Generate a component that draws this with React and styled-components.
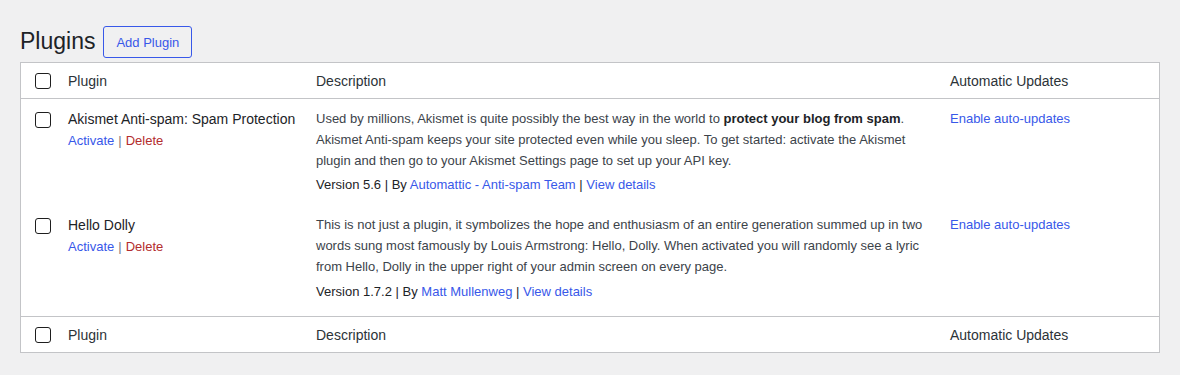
import styled, { createGlobalStyle } from "styled-components";

const GlobalStyle = createGlobalStyle`
  body {
    margin: 0;
    background: #f0f0f1;
    font-family: "Liberation Sans", Arial, sans-serif;
    color: #3c434a;
  }
`;

const plugins = [
  {
    id: "akismet",
    name: "Akismet Anti-spam: Spam Protection",
    desc: (
      <>
        Used by millions, Akismet is quite possibly the best way in the world
        to <strong>protect your blog from spam</strong>. Akismet Anti-spam
        keeps your site protected even while you sleep. To get started:
        activate the Akismet plugin and then go to your Akismet Settings page
        to set up your API key.
      </>
    ),
    version: "5.6",
    author: "Automattic - Anti-spam Team",
  },
  {
    id: "hello",
    name: "Hello Dolly",
    desc: (
      <>
        This is not just a plugin, it symbolizes the hope and enthusiasm of an
        entire generation summed up in two words sung most famously by Louis
        Armstrong: Hello, Dolly. When activated you will randomly see a lyric
        from Hello, Dolly in the upper right of your admin screen on every
        page.
      </>
    ),
    version: "1.7.2",
    author: "Matt Mullenweg",
  },
];

function HeadRow({ top }) {
  return (
    <Row $head $top={top}>
      <CheckCell $head>
        <Checkbox />
      </CheckCell>
      <HeadCell>Plugin</HeadCell>
      <HeadCell>Description</HeadCell>
      <HeadCell>Automatic Updates</HeadCell>
    </Row>
  );
}

export default function App() {
  return (
    <Wrap>
      <GlobalStyle />
      <TitleBar>
        <Title>Plugins</Title>
        <AddButton>Add Plugin</AddButton>
      </TitleBar>
      <Table>
        <HeadRow top />
        <Body>
          {plugins.map((p) => (
            <Row key={p.id}>
              <CheckCell>
                <Checkbox />
              </CheckCell>
              <Cell>
                <Name>{p.name}</Name>
                <Actions>
                  <Link>Activate</Link>
                  <Sep>|</Sep>
                  <Link $danger>Delete</Link>
                </Actions>
              </Cell>
              <Cell>
                <Desc>{p.desc}</Desc>
                <Meta>
                  Version {p.version} <Sep>|</Sep> By <Link>{p.author}</Link>{" "}
                  <Sep>|</Sep> <Link>View details</Link>
                </Meta>
              </Cell>
              <Cell>
                <Link>Enable auto-updates</Link>
              </Cell>
            </Row>
          ))}
        </Body>
        <HeadRow />
      </Table>
    </Wrap>
  );
}

const Wrap = styled.div`
  padding: 26px 20px 20px;
`;

const TitleBar = styled.div`
  display: flex;
  align-items: center;
  gap: 8px;
  height: 32px;
  margin-bottom: 4px;
`;

const Title = styled.h1`
  margin: 0;
  font-size: 23px;
  font-weight: 400;
  line-height: 1.3;
  color: #1d2327;
`;

const AddButton = styled.button`
  box-sizing: border-box;
  height: 32px;
  padding: 0 12px;
  border: 1px solid #3858e9;
  border-radius: 3px;
  background: transparent;
  color: #3858e9;
  font-family: inherit;
  font-size: 13px;
`;

const Table = styled.div`
  background: #fff;
  border: 1px solid #c3c4c7;
`;

const Body = styled.div`
  padding-bottom: 5px;
`;

const Row = styled.div`
  display: grid;
  grid-template-columns: 37px 248px 634px 1fr;
  ${(p) =>
    p.$head &&
    `
    height: 35px;
    align-items: center;
    ${p.$top ? "border-bottom" : "border-top"}: 1px solid #c3c4c7;
  `}
`;

const Cell = styled.div`
  padding: 10px 10px 9px;
  font-size: 13px;
  line-height: 1.6;
`;

const HeadCell = styled.div`
  padding: 0 10px;
  font-size: 14px;
  color: #2c3338;
`;

const CheckCell = styled.div`
  padding: ${(p) => (p.$head ? "0" : "13px")} 0 0 14px;
  display: flex;
  align-items: ${(p) => (p.$head ? "center" : "flex-start")};
`;

const Checkbox = styled.span`
  display: block;
  box-sizing: border-box;
  width: 16px;
  height: 16px;
  border: 1px solid #1e1e1e;
  border-radius: 3px;
  background: #fff;
`;

const Name = styled.div`
  font-size: 14px;
  line-height: 1.5;
  color: #1d2327;
`;

const Actions = styled.div`
  margin-top: 1px;
  display: flex;
  gap: 4px;
`;

const Link = styled.a`
  color: ${(p) => (p.$danger ? "#b32d2e" : "#3858e9")};
  cursor: pointer;
`;

const Sep = styled.span`
  color: #787c82;
`;

const Desc = styled.p`
  margin: 0;
  strong {
    font-weight: 700;
    color: #1d2327;
  }
`;

const Meta = styled.div`
  margin-top: 4px;
  color: #1d2327;
  ${Sep} {
    color: #1d2327;
  }
`;
